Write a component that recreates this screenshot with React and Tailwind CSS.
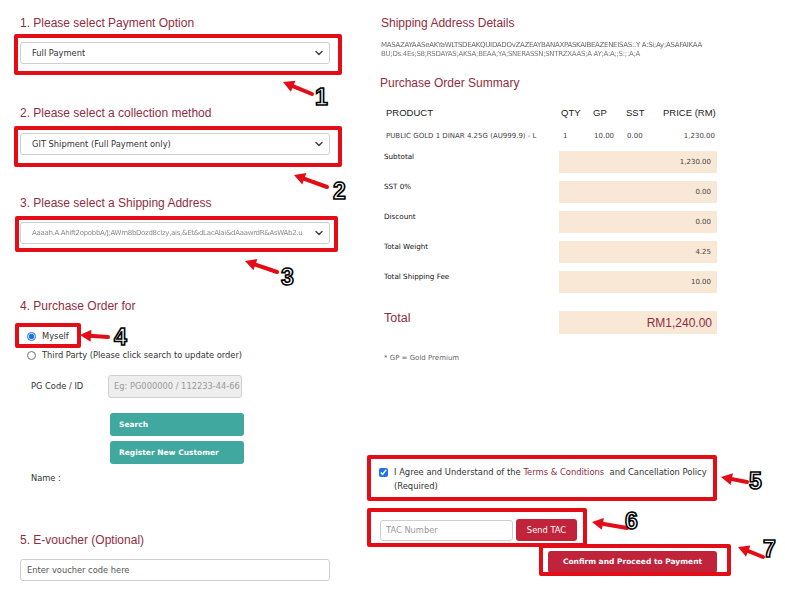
import { ChevronDown } from 'lucide-react';

const heading = "font-['Liberation_Sans',Arial,sans-serif] text-[12px] leading-[16px] text-[#8f2d3f]";
const small = "font-['DejaVu_Sans',Verdana,sans-serif]";

const Select = ({ children, className = '' }) => (
    <div className={`flex items-center justify-between h-[22px] w-[310px] border border-[#cfcfcf] rounded-[3px] bg-white pl-[11px] pr-[4px] ${small} text-[8.3px] text-[#333] ${className}`}>
        <span className="truncate">{children}</span>
        <ChevronDown size={12} strokeWidth={3} className="text-[#444] shrink-0" />
    </div>
);

// blurred-out personal data, as in the screenshot
const Noise = ({ text, className = '' }) => (
    <span className={`block whitespace-nowrap overflow-hidden ${small} text-[7px] tracking-[-0.3px] blur-[0.6px] ${className}`}>{text}</span>
);

const RedBox = ({ className }) => (
    <div className={`absolute border-[4px] border-[#e30d17] rounded-[2px] pointer-events-none ${className}`} />
);

const Arrow = ({ tip, tail }) => {
    const [x1, y1] = tip;
    const [x2, y2] = tail;
    const len = Math.hypot(x2 - x1, y2 - y1);
    const ux = (x2 - x1) / len;
    const uy = (y2 - y1) / len;
    const bx = x1 + ux * 11;
    const by = y1 + uy * 11;
    const pts = `${x1},${y1} ${bx - uy * 6},${by + ux * 6} ${bx + uy * 6},${by - ux * 6}`;
    return (
        <g>
            <line x1={x1 + ux * 6} y1={y1 + uy * 6} x2={x2} y2={y2} stroke="#e30d17" strokeWidth={4} strokeLinecap="round" />
            <polygon points={pts} fill="#e30d17" />
        </g>
    );
};

const arrows = [
    { tip: [283, 82], tail: [312, 94] },
    { tip: [294, 175], tail: [327, 187] },
    { tip: [245, 261], tail: [277, 272] },
    { tip: [80, 335], tail: [108, 337] },
    { tip: [721, 477], tail: [747, 482] },
    { tip: [592, 522], tail: [627, 528] },
    { tip: [738, 547], tail: [763, 557] },
];

const Num = ({ children, className }) => (
    <div className={`absolute font-['Liberation_Sans',Arial,sans-serif] font-bold text-[23px] leading-[23px] text-white [-webkit-text-stroke:1.6px_#000] pointer-events-none ${className}`}>
        {children}
    </div>
);

const summary = [
    { label: 'Subtotal', value: '1,230.00' },
    { label: 'SST 0%', value: '0.00' },
    { label: 'Discount', value: '0.00' },
    { label: 'Total Weight', value: '4.25' },
    { label: 'Total Shipping Fee', value: '10.00' },
];

const App = () => {
    return (
        <div className="relative w-[785px] h-[605px] bg-white overflow-hidden flex">
            {/* Left column */}
            <div className="w-[310px] ml-[20px] pt-[15px] flex flex-col">
                <h2 className={heading}>1. Please select Payment Option</h2>
                <Select className="mt-[11px]">Full Payment</Select>

                <h2 className={`${heading} mt-[41px]`}>2. Please select a collection method</h2>
                <Select className="mt-[12px]">GIT Shipment (Full Payment only)</Select>

                <h2 className={`${heading} mt-[40px]`}>3. Please select a Shipping Address</h2>
                <Select className="mt-[11px]">
                    <Noise text="Aaaah.A.Ahift2opobbA/J;AWm8bDozd8clzy,ais,&Et&dLacAlai&dAaawrdR&AsWAb2.u" className="w-[275px] text-[#8a8a8a]" />
                </Select>

                <h2 className={`${heading} mt-[54px]`}>4. Purchase Order for</h2>
                <label className={`mt-[15px] flex items-center h-[14px] pl-[7px] ${small} text-[8.3px] text-[#333]`}>
                    <input type="radio" checked readOnly className="w-[9px] h-[9px] m-0 accent-[#1a73e8]" />
                    <span className="ml-[6px]">Myself</span>
                </label>
                <label className={`mt-[5px] flex items-center h-[14px] pl-[7px] ${small} text-[8.3px] text-[#333]`}>
                    <input type="radio" readOnly className="w-[9px] h-[9px] m-0" />
                    <span className="ml-[6px] whitespace-nowrap">Third Party (Please click search to update order)</span>
                </label>

                <div className={`mt-[13px] flex items-center h-[23px] ${small} text-[8.3px] text-[#333]`}>
                    <span className="pl-[11px] w-[88px]">PG Code / ID</span>
                    <div className="w-[134px] h-[23px] flex items-center bg-[#eeeeee] border border-[#d0d0d0] rounded-[3px] pl-[5px] overflow-hidden">
                        <span className="whitespace-nowrap text-[#999]">Eg: PG000000 / 112233-44-66</span>
                    </div>
                </div>

                <div className="ml-[90px] flex flex-col gap-[5px] mt-[15px]">
                    <button className={`w-[134px] h-[23px] text-left pl-[9px] bg-[#40a89e] text-white rounded-[3px] ${small} text-[7.5px] font-bold`}>Search</button>
                    <button className={`w-[134px] h-[23px] text-left pl-[9px] bg-[#40a89e] text-white rounded-[3px] ${small} text-[7.5px] font-bold`}>Register New Customer</button>
                </div>

                <p className={`mt-[8px] h-[12px] leading-[12px] pl-[11px] ${small} text-[8.3px] text-[#333]`}>Name :</p>

                <h2 className={`${heading} mt-[48px]`}>5. E-voucher (Optional)</h2>
                <div className={`mt-[11px] w-[310px] h-[22px] flex items-center border border-[#cfcfcf] rounded-[3px] pl-[6px] ${small} text-[8.3px] text-[#555]`}>
                    Enter voucher code here
                </div>
            </div>

            {/* Right column */}
            <div className="ml-[50px] w-[337px] pt-[15px] flex flex-col">
                <h2 className={`${heading} pl-[1px]`}>Shipping Address Details</h2>
                <div className="mt-[10px] h-[17px] leading-[8.5px] pl-[1px]">
                    <Noise text="MASAZAYAASeAKYaWLTSDEAKQUIDADOvZAZEAYBANAXPASKAIBEAZENEISAS:.Y  A:Si;Ay;ASAFAIKAA" className="w-[328px] leading-[8.5px] text-[#666]" />
                    <Noise text="BU;Ds.4Es;S8;RSDAYAS;AKSA;BEAA;YA;SNERASSN;SNTRZXAAS;A  AY;A:A;;S:;:A;A" className="w-[310px] leading-[8.5px] text-[#777]" />
                </div>

                <h2 className={`${heading} mt-[17px]`}>Purchase Order Summary</h2>

                <div className="mt-[15px] grid grid-cols-[175px_32px_33px_37px_1fr] pl-[6px] pr-[2px] h-[12px] items-center font-['Liberation_Sans',Arial,sans-serif] text-[9.5px] text-[#222] whitespace-nowrap">
                    <span>PRODUCT</span>
                    <span>QTY</span>
                    <span>GP</span>
                    <span>SST</span>
                    <span className="text-right">PRICE (RM)</span>
                </div>
                <div className={`mt-[12px] grid grid-cols-[175px_32px_33px_37px_1fr] pl-[6px] pr-[2px] h-[12px] items-center ${small} text-[7px] text-[#444]`}>
                    <span className="whitespace-nowrap">PUBLIC GOLD 1 DINAR 4.25G (AU999.9) - L</span>
                    <span className="pl-[2px]">1</span>
                    <span className="pl-[1px]">10.00</span>
                    <span className="pl-[1px]">0.00</span>
                    <span className="text-right">1,230.00</span>
                </div>

                <div className="mt-[9px] flex flex-col gap-[8px]">
                    {summary.map(row => (
                        <div key={row.label} className="flex justify-between h-[22px]">
                            <span className={`pl-[4px] pt-[1px] leading-[10px] ${small} text-[7.2px] text-[#111]`}>{row.label}</span>
                            <div className={`w-[158px] h-[22px] bg-[#f9e8d6] flex items-center justify-end pr-[6px] pt-[1px] ${small} text-[7px] text-[#444]`}>
                                {row.value}
                            </div>
                        </div>
                    ))}
                </div>

                <div className="mt-[18px] flex justify-between h-[23px]">
                    <span className="pl-[4px] font-['Liberation_Sans',Arial,sans-serif] text-[12.5px] leading-[14px] text-[#8f2d3f]">Total</span>
                    <div className="w-[158px] h-[23px] bg-[#f9e8d6] flex items-center justify-end pr-[5px] font-['Liberation_Sans',Arial,sans-serif] text-[12px] text-[#8f2d3f]">
                        RM1,240.00
                    </div>
                </div>

                <p className={`mt-[19px] h-[10px] leading-[10px] pl-[4px] ${small} text-[7px] text-[#666]`}>* GP = Gold Premium</p>

                <div className={`mt-[102px] flex items-start ml-[-1px] ${small} text-[8.4px] leading-[14px] text-[#333]`}>
                    <input type="checkbox" checked readOnly className="w-[9px] h-[9px] m-0 mt-[3px] accent-[#1a73e8] shrink-0" />
                    <p className="ml-[6px] whitespace-nowrap">
                        I Agree and Understand of the <span className="text-[#8f2d3f]">Terms &amp; Conditions</span>&nbsp; and Cancellation Policy
                        <br />
                        (Required)
                    </p>
                </div>

                <div className="mt-[26px] flex items-center h-[22px]">
                    <div className={`w-[133px] h-[21px] flex items-center border border-[#cfcfcf] rounded-[3px] pl-[5px] ${small} text-[8.3px] text-[#999]`}>
                        TAC Number
                    </div>
                    <button className={`ml-[3px] w-[61px] h-[22px] bg-[#c1233b] text-white rounded-[3px] ${small} text-[8.3px]`}>Send TAC</button>
                </div>

                <button className={`mt-[10px] self-end w-[169px] h-[22px] bg-[#c1233b] text-white rounded-[3px] ${small} text-[7.5px] font-semibold`}>
                    Confirm and Proceed to Payment
                </button>
            </div>

            {/* Annotation overlay */}
            <RedBox className="left-[14px] top-[34px] w-[328px] h-[41px]" />
            <RedBox className="left-[14px] top-[126px] w-[328px] h-[41px]" />
            <RedBox className="left-[15px] top-[216px] w-[323px] h-[36px]" />
            <RedBox className="left-[15px] top-[323px] w-[66px] h-[25px]" />
            <RedBox className="left-[367px] top-[455px] w-[350px] h-[46px]" />
            <RedBox className="left-[367px] top-[508px] w-[220px] h-[39px]" />
            <RedBox className="left-[539px] top-[544px] w-[192px] h-[32px]" />

            <svg className="absolute inset-0 pointer-events-none" width="785" height="605">
                {arrows.map((a, i) => <Arrow key={i} {...a} />)}
            </svg>

            <Num className="left-[315px] top-[86px]">1</Num>
            <Num className="left-[333px] top-[180px]">2</Num>
            <Num className="left-[281px] top-[266px]">3</Num>
            <Num className="left-[114px] top-[326px]">4</Num>
            <Num className="left-[749px] top-[470px]">5</Num>
            <Num className="left-[625px] top-[510px]">6</Num>
            <Num className="left-[763px] top-[538px]">7</Num>
        </div>
    );
};

export default App;
